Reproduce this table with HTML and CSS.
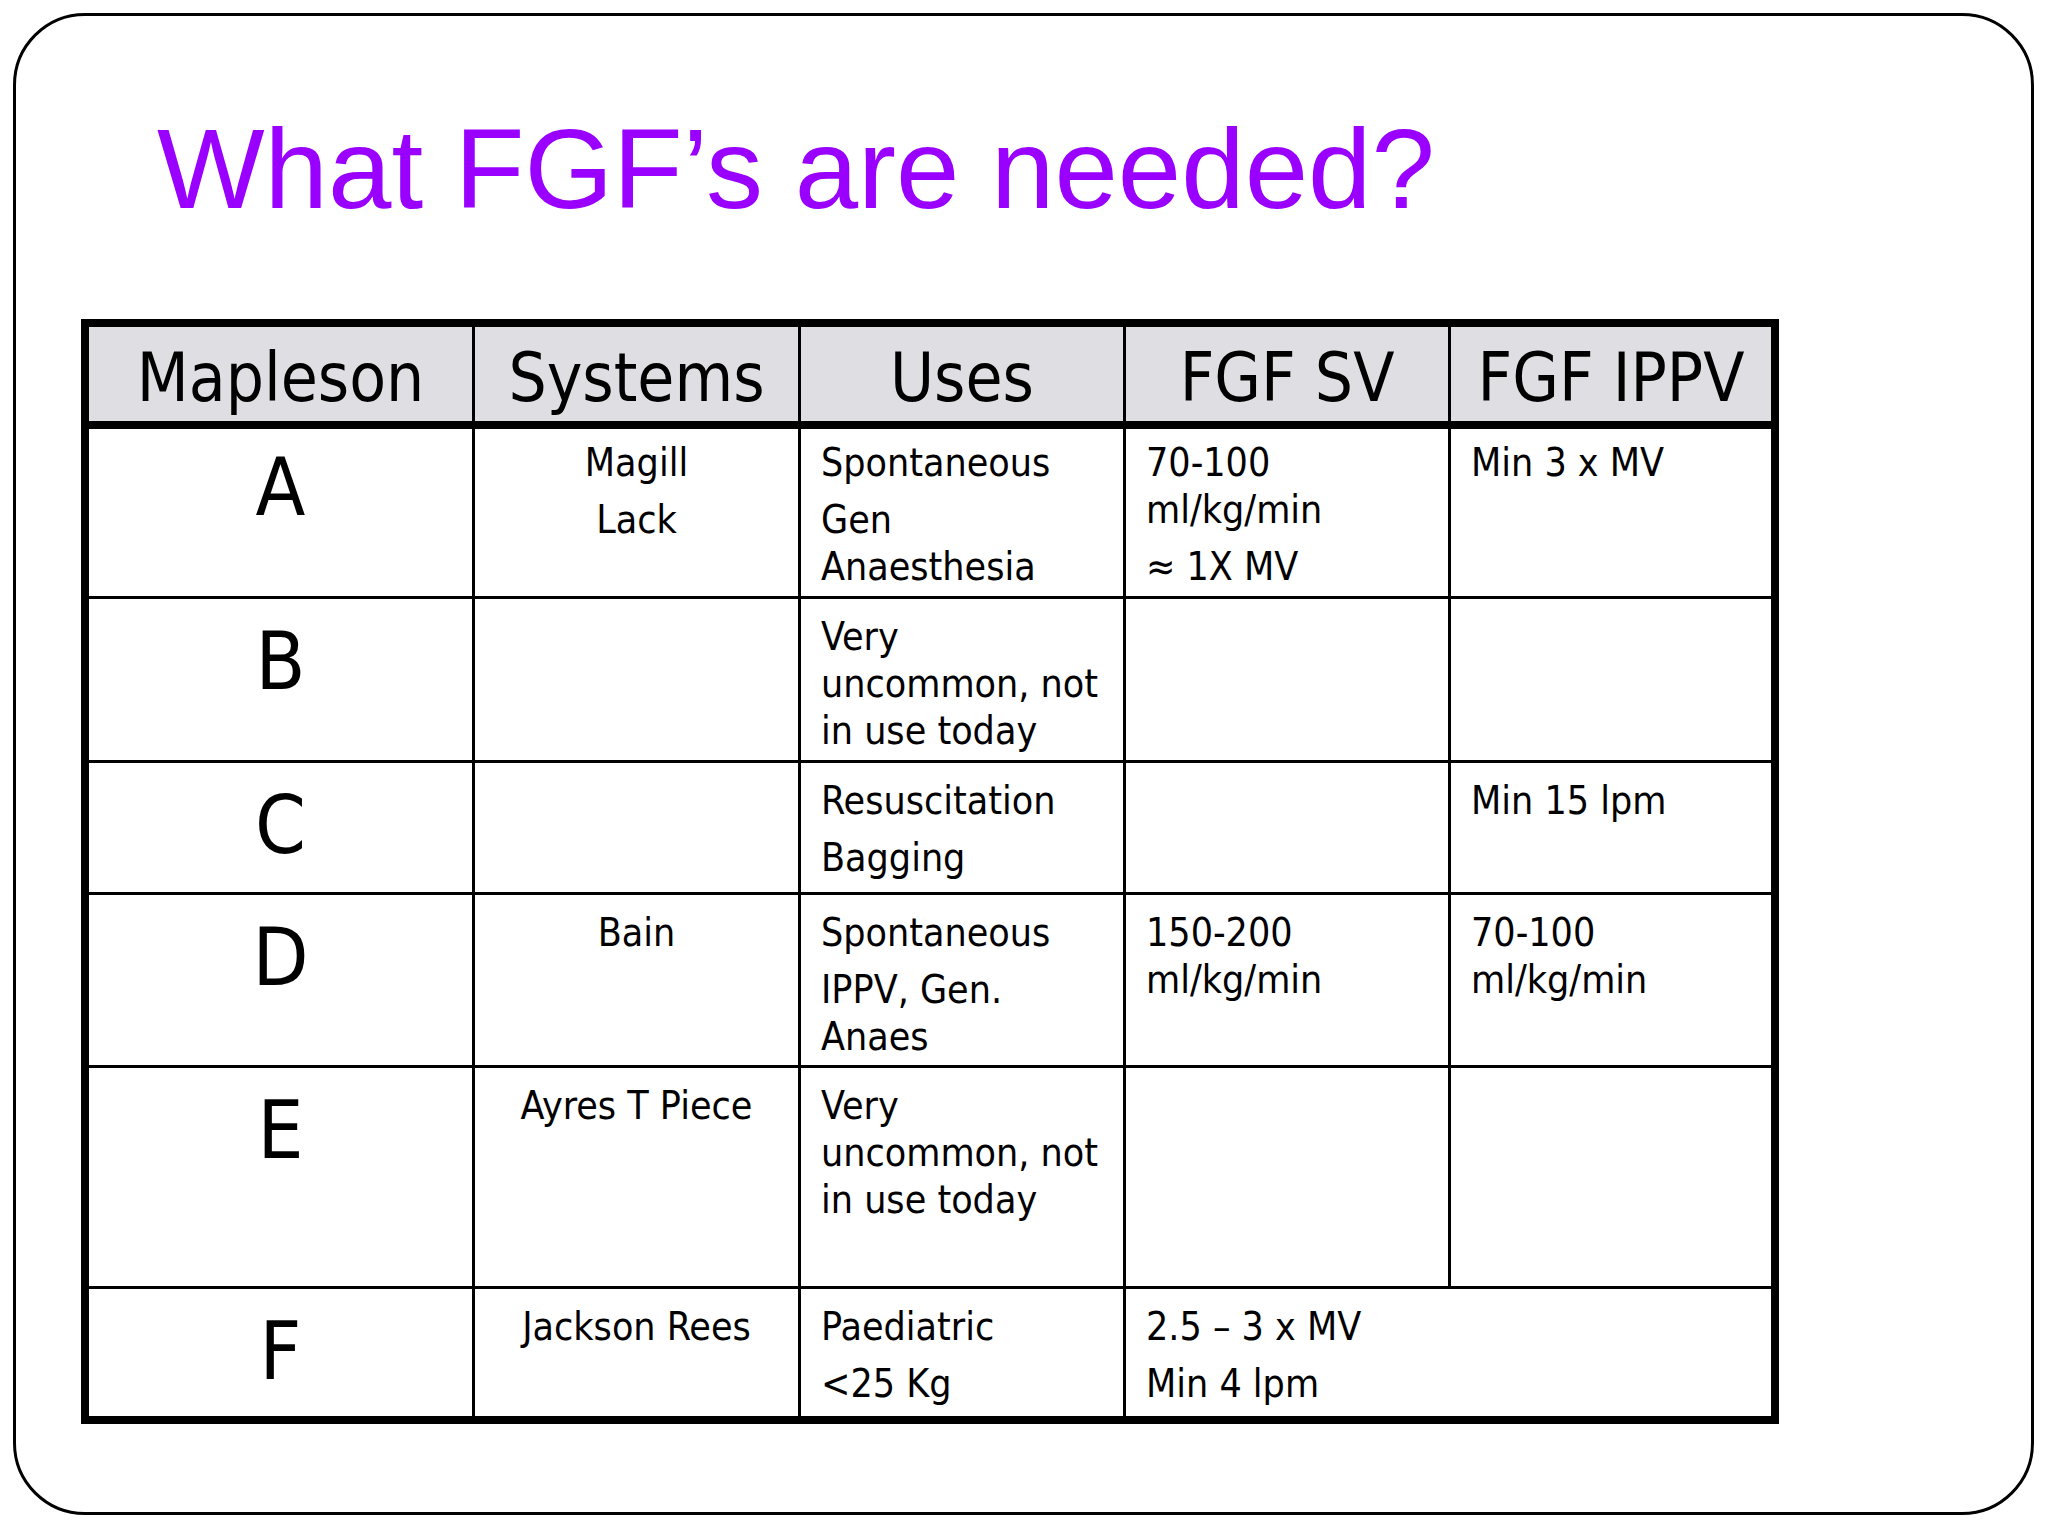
FILE: index.html
```html
<!DOCTYPE html>
<html lang="en">
<head>
<meta charset="utf-8">
<title>What FGF's are needed?</title>
<link rel="stylesheet" href="styles.css">
</head>
<body>
<div class="slide">
  <h1 class="title">What FGF’s are needed?</h1>
  <div class="grid">
    <div class="hd">Mapleson</div>
    <div class="hd">Systems</div>
    <div class="hd">Uses</div>
    <div class="hd">FGF SV</div>
    <div class="hd">FGF IPPV</div>

    <div class="cell letter first">A</div>
    <div class="cell center first"><p>Magill</p><p>Lack</p></div>
    <div class="cell first"><p>Spontaneous</p><p>Gen<br>Anaesthesia</p></div>
    <div class="cell first"><p>70-100<br>ml/kg/min</p><p>≈ 1X MV</p></div>
    <div class="cell first"><p>Min 3 x MV</p></div>

    <div class="cell letter">B</div>
    <div class="cell center"></div>
    <div class="cell"><p>Very<br>uncommon, not<br>in use today</p></div>
    <div class="cell"></div>
    <div class="cell"></div>

    <div class="cell letter">C</div>
    <div class="cell center"></div>
    <div class="cell"><p>Resuscitation</p><p>Bagging</p></div>
    <div class="cell"></div>
    <div class="cell"><p>Min 15 lpm</p></div>

    <div class="cell letter">D</div>
    <div class="cell center"><p>Bain</p></div>
    <div class="cell"><p>Spontaneous</p><p>IPPV, Gen.<br>Anaes</p></div>
    <div class="cell"><p>150-200<br>ml/kg/min</p></div>
    <div class="cell"><p>70-100<br>ml/kg/min</p></div>

    <div class="cell letter">E</div>
    <div class="cell center"><p>Ayres T Piece</p></div>
    <div class="cell"><p>Very<br>uncommon, not<br>in use today</p></div>
    <div class="cell"></div>
    <div class="cell"></div>

    <div class="cell letter">F</div>
    <div class="cell center"><p>Jackson Rees</p></div>
    <div class="cell"><p>Paediatric</p><p>&lt;25 Kg</p></div>
    <div class="cell span2"><p>2.5 – 3 x MV</p><p>Min 4 lpm</p></div>
  </div>
</div>
</body>
</html>
```
FILE: styles.css
```css
html, body {
  margin: 0;
  padding: 0;
  background: #ffffff;
}

body {
  width: 2048px;
  height: 1536px;
  overflow: hidden;
}

.slide {
  box-sizing: border-box;
  margin: 13px 0 0 13px;
  width: 2021px;
  height: 1502px;
  border: 3px solid #000;
  border-radius: 72px;
  padding: 88px 0 0 65px;
  background: #fff;
}

.title {
  margin: 0 0 85px 76px;
  font-family: "Liberation Sans", Arial, sans-serif;
  font-weight: normal;
  font-size: 114px;
  line-height: 130px;
  color: #9900ff;
  white-space: nowrap;
}

.grid {
  display: grid;
  width: 1698px;
  box-sizing: border-box;
  border: 8px solid #000;
  background: #000;
  gap: 3px;
  grid-template-columns: 383px 323px 322px 322px 320px;
  grid-template-rows: 99px 167px 161px 129px 170px 218px 127px;
  font-family: "DejaVu Sans Condensed", "DejaVu Sans", sans-serif;
  font-stretch: condensed;
  color: #000;
}

.hd {
  box-sizing: border-box;
  background: #dfdee2;
  border-bottom: 5px solid #000;
  padding-top: 7px;
  display: flex;
  align-items: center;
  justify-content: center;
  font-size: 67px;
  line-height: 80px;
  white-space: nowrap;
}

.cell {
  background: #fff;
  box-sizing: border-box;
  padding: 14px 20px 0 20px;
  font-size: 39px;
  line-height: 47px;
  white-space: nowrap;
}

.cell.first {
  padding-top: 10px;
}

.cell p {
  margin: 0;
}

.cell p + p {
  margin-top: 10px;
}

.center {
  text-align: center;
}

.letter {
  text-align: center;
  font-size: 81px;
  line-height: 81px;
  padding-top: 22px;
}

.letter.first {
  padding-top: 18px;
}

.span2 {
  grid-column: span 2;
}
```
